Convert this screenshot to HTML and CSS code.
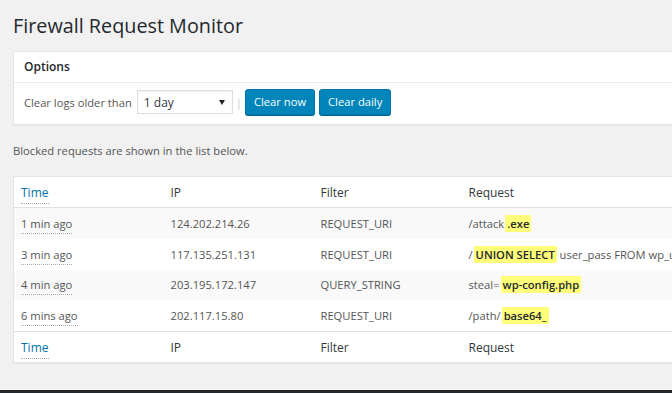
FILE: index.html
```html
<!DOCTYPE html>
<html>
<head>
<meta charset="utf-8">
<link rel="stylesheet" href="styles.css">
</head>
<body>
<div class="page">
  <div class="wrap">
    <h1 class="title">Firewall Request Monitor</h1>
    <div class="postbox">
      <div class="postbox-head">Options</div>
      <div class="postbox-body">
        <span class="label">Clear logs older than</span>
        <div class="select"><span>1 day</span><span class="caret"></span></div>
        <span class="sep">|</span>
        <button class="btn">Clear now</button>
        <button class="btn">Clear daily</button>
      </div>
    </div>
    <p class="note">Blocked requests are shown in the list below.</p>
    <table class="list">
      <colgroup>
        <col class="c1"><col class="c2"><col class="c3"><col class="c4">
      </colgroup>
      <thead>
        <tr><th><a class="sort">Time</a></th><th>IP</th><th>Filter</th><th>Request</th></tr>
      </thead>
      <tbody>
        <tr class="alt"><td><abbr>1 min ago</abbr></td><td>124.202.214.26</td><td>REQUEST_URI</td><td>/attack<mark>.exe</mark></td></tr>
        <tr><td><abbr>3 min ago</abbr></td><td>117.135.251.131</td><td>REQUEST_URI</td><td>/<mark>UNION SELECT</mark> user_pass FROM wp_users</td></tr>
        <tr class="alt"><td><abbr>4 min ago</abbr></td><td>203.195.172.147</td><td>QUERY_STRING</td><td>steal=<mark>wp-config.php</mark></td></tr>
        <tr><td><abbr>6 mins ago</abbr></td><td>202.117.15.80</td><td>REQUEST_URI</td><td>/path/<mark>base64_</mark></td></tr>
      </tbody>
      <tfoot>
        <tr><th><a class="sort">Time</a></th><th>IP</th><th>Filter</th><th>Request</th></tr>
      </tfoot>
    </table>
  </div>
</div>
<div class="bar"></div>
</body>
</html>
```
FILE: styles.css
```css
html, body {
  margin: 0;
  padding: 0;
  background: #f1f1f1;
  overflow: hidden;
}
body {
  font-family: "Open Sans", "Liberation Sans", sans-serif;
  font-size: 11.2px;
  color: #555;
  width: 672px;
  height: 393px;
}
.page {
  height: 390px;
  overflow: hidden;
}
.wrap {
  padding: 0 0 0 13px;
  width: 800px;
}
.title {
  margin: 0;
  padding: 12px 0 0;
  font-size: 19.8px;
  font-weight: 400;
  line-height: 27px;
  color: #23282d;
  height: 39px;
}
.postbox {
  background: #fff;
  border: 1px solid #e5e5e5;
  box-shadow: 0 1px 1px rgba(0,0,0,.04);
}
.postbox-head {
  height: 30px;
  line-height: 30px;
  padding: 0 10px;
  font-size: 12px;
  font-weight: 600;
  color: #23282d;
  border-bottom: 1px solid #eee;
}
.postbox-body {
  display: flex;
  align-items: center;
  padding: 6px 10px 9px;
  height: 26px;
}
.label {
  margin-right: 5px;
}
.select {
  height: 22px;
  border: 1px solid #ddd;
  box-shadow: inset 0 1px 2px rgba(0,0,0,.07);
  display: flex;
  align-items: center;
  justify-content: space-between;
  padding: 0 7px 0 6px;
  box-sizing: content-box;
  width: 81px;
  font-size: 12px;
  color: #32373c;
}
.caret {
  width: 0;
  height: 0;
  border-left: 3px solid transparent;
  border-right: 3px solid transparent;
  border-top: 5px solid #222;
}
.sep {
  color: #ccc;
  margin: 0 3px 0 3px;
}
.btn {
  font-family: inherit;
  font-size: 11.2px;
  height: 26px;
  line-height: 24px;
  padding: 0 8px;
  margin-right: 4px;
  background: #0085ba;
  border: 1px solid #0073aa;
  border-radius: 3px;
  box-shadow: 0 1px 0 #006799;
  color: #fff;
}
.note {
  margin: 18px 0 0;
  line-height: 16px;
  height: 33px;
}
.list {
  border-collapse: collapse;
  table-layout: fixed;
  width: 800px;
  background: #fff;
  border: 1px solid #e5e5e5;
  box-shadow: 0 1px 1px rgba(0,0,0,.04);
}
.c1 { width: 150px; }
.c2 { width: 150px; }
.c3 { width: 148px; }
.list th, .list td {
  text-align: left;
  padding: 0 7px;
  white-space: nowrap;
  overflow: hidden;
}
.list td {
  height: 30.75px;
}
.list th {
  font-size: 12px;
  font-weight: 400;
  color: #32373c;
}
.list thead th {
  border-bottom: 1px solid #e1e1e1;
  height: 30px;
}
.list tfoot th {
  border-top: 1px solid #e1e1e1;
  height: 30px;
}
.list tr.alt td {
  background: #f9f9f9;
}
.sort {
  color: #0073aa;
  border-bottom: 1px dotted #aaa;
  padding-bottom: 2px;
}
abbr {
  text-decoration: none;
  border-bottom: 1px dotted #aaa;
  padding-bottom: 2px;
}
mark {
  background: #ffff7a;
  color: #23282d;
  font-weight: 600;
  padding: 1px 2px;
  margin-left: 1px;
}
.bar {
  height: 3px;
  background: #23282d;
}
```
